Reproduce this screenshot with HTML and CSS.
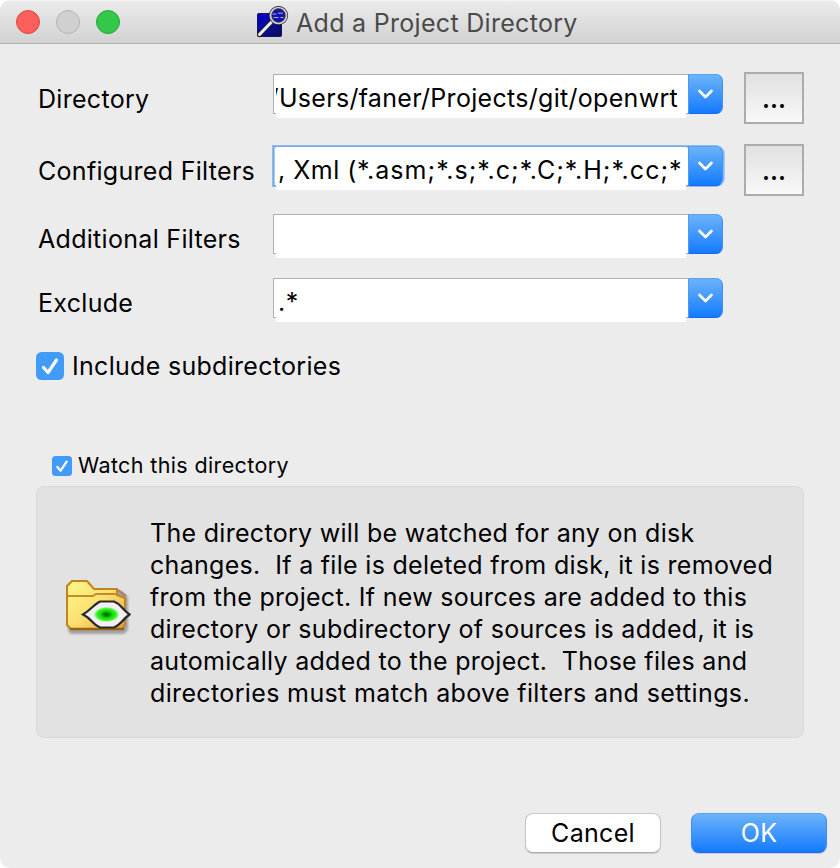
FILE: index.html
```html
<!DOCTYPE html>
<html lang="en">
<head>
<meta charset="utf-8">
<title>Add a Project Directory</title>
<link rel="stylesheet" href="styles.css">
</head>
<body>
<div class="window">
  <header class="titlebar">
    <div class="lights"><i class="light close"></i><i class="light minimize"></i><i class="light zoom"></i></div>
    <div class="title">
      <svg class="app-icon" width="32" height="32" viewBox="0 0 32 32">
        <defs><linearGradient id="sq" x1="0" y1="0" x2="1" y2="1"><stop offset="0" stop-color="#0000d0"/><stop offset=".5" stop-color="#0c0c9c"/><stop offset="1" stop-color="#0a0a50"/></linearGradient></defs>
        <rect x=".5" y="7.5" width="24" height="23" rx="1" fill="url(#sq)" stroke="#15155a"/>
        <path d="M2.500 28.500 15 15.500" stroke="#222" stroke-width="5" stroke-linecap="round"/>
        <path d="M2.500 28.500 15 15.500" stroke="#eee" stroke-width="3" stroke-linecap="round"/>
        <circle cx="21.500" cy="9.500" r="8" fill="#1414a8" stroke="#333" stroke-width="3.200"/>
        <circle cx="21.500" cy="9.500" r="8" fill="none" stroke="#d0d0d6" stroke-width="1.700"/>
        <path d="M15.500 8h4m1.500-.8h5M16.500 11.500h5m2 0h3" stroke="#a8a8e8" stroke-width="1"/>
      </svg>
      <span class="title-text">Add a Project Directory</span>
    </div>
  </header>

  <main class="content">
    <div class="row row-tall">
      <label class="label">Directory</label>
      <div class="combo"><div class="editor end"><span>/Users/faner/Projects/git/openwrt</span></div><div class="arrow"><svg width="18" height="12" viewBox="0 0 18 12"><path d="M2.500 3 8.500 9 14.500 3"/></svg></div></div>
      <div class="browse">...</div>
    </div>
    <div class="row row-tall">
      <label class="label">Configured Filters</label>
      <div class="combo focused"><div class="editor"><span class="names">, Xml (</span><span class="patterns">*.asm;*.s;*.c;*.C;*.H;*.cc;*</span></div><div class="arrow"><svg width="18" height="12" viewBox="0 0 18 12"><path d="M2.500 3 8.500 9 14.500 3"/></svg></div></div>
      <div class="browse">...</div>
    </div>
    <div class="row">
      <label class="label">Additional Filters</label>
      <div class="combo"><div class="editor"></div><div class="arrow"><svg width="18" height="12" viewBox="0 0 18 12"><path d="M2.500 3 8.500 9 14.500 3"/></svg></div></div>
    </div>
    <div class="row">
      <label class="label">Exclude</label>
      <div class="combo"><div class="editor"><span class="exclude">.*</span></div><div class="arrow"><svg width="18" height="12" viewBox="0 0 18 12"><path d="M2.500 3 8.500 9 14.500 3"/></svg></div></div>
    </div>

    <div class="check">
      <svg width="28" height="28" viewBox="0 0 28 28"><rect width="28" height="28" rx="5.500" fill="#419bf9"/><path class="tick" d="M7.500 15.500 12 20.500 20.500 8"/></svg>
      <span>Include subdirectories</span>
    </div>
    <div class="check small">
      <svg width="20" height="20" viewBox="0 0 28 28"><rect width="28" height="28" rx="5" fill="#419bf9"/><path class="tick" d="M7.500 15.500 12 20.500 20.500 8"/></svg>
      <span>Watch this directory</span>
    </div>

    <section class="group">
      <svg class="folder" width="66" height="58" viewBox="0 0 66 58">
        <defs>
          <linearGradient id="fo" x1="0" y1="0" x2="1" y2="1"><stop offset="0" stop-color="#fff78c"/><stop offset=".5" stop-color="#fce070"/><stop offset="1" stop-color="#e0a040"/></linearGradient>
          <radialGradient id="iris"><stop offset="0" stop-color="#005800"/><stop offset=".3" stop-color="#08a000"/><stop offset=".5" stop-color="#18e008"/><stop offset=".75" stop-color="#30f020"/><stop offset="1" stop-color="#c8f8c0"/></radialGradient>
          <filter id="soft"><feGaussianBlur stdDeviation="1"/></filter>
        </defs>
        <path d="M5 12h52l6 6v33l-4 4H6l-3-3Z" fill="#777" opacity=".6" filter="url(#soft)"/>
        <path d="M2 7 7 2h15l7 8h23v6l8 3v26l-3 5H6l-4-4Z" fill="url(#fo)" stroke="#c08420" stroke-width="2"/>
        <path d="M3 17h25l3-2h22" fill="none" stroke="#c48c28" stroke-width="2"/>
        <path d="M53 11l8 6" stroke="#a08068" stroke-width="2"/>
        <path d="M5 50h54" stroke="#9c6410" stroke-width="2.500"/>
        <path d="M18 35.500Q22 33 27 28.500T35 22.500H49Q53 24 57 28.500T64.500 35.500Q61 38 57 42.500T49 48.500H35Q31 47 27 42.500T18 35.500Z" fill="#f2f0f4" stroke="#282828" stroke-width="2.200"/>
        <ellipse cx="41.500" cy="35.500" rx="12.500" ry="7.500" fill="url(#iris)"/>
      </svg>
      <div class="note">
        <div>The directory will be watched for any on disk</div>
        <div>changes.&nbsp; If a file is deleted from disk, it is removed</div>
        <div>from the project. If new sources are added to this</div>
        <div>directory or subdirectory of sources is added, it is</div>
        <div>automically added to the project.&nbsp; Those files and</div>
        <div class="last">directories must match above filters and settings.</div>
      </div>
    </section>

    <footer class="actions">
      <div class="btn">Cancel</div>
      <div class="btn primary">OK</div>
    </footer>
  </main>
</div>
</body>
</html>
```
FILE: styles.css
```css
* { box-sizing: border-box; }
body { margin: 0; background: #fff; font-family: Inter, "Liberation Sans", sans-serif; font-size: 25px; letter-spacing: .3px; color: #000; }
.window { width: 840px; height: 868px; background: #ececec; border-radius: 10px; overflow: hidden; white-space: nowrap; }
.titlebar { height: 44px; display: flex; align-items: center; background: linear-gradient(#ebebeb, #d2d2d2); border-bottom: 1px solid #b1b1b1; border-top: 1px solid #f6f6f6; }
.lights { display: flex; gap: 16px; padding-left: 16px; width: 257px; }
.light { width: 24px; height: 24px; border-radius: 50%; border: 1px solid; }
.close { background: #fc605c; border-color: #e2443f; }
.minimize { background: #d0d0d0; border-color: #b3b3b3; }
.zoom { background: #34c84a; border-color: #24a732; }
.title { display: flex; align-items: center; gap: 7px; color: #4a4a4a; }
.title-text { padding-top: 2px; }
.app-icon { display: block; }
.content { padding-top: 28px; }
.row { height: 64px; padding-left: 38px; display: flex; align-items: flex-start; }
.row-tall { height: 72px; }
.row-tall + .row:not(.row-tall) { margin-top: -4px; }
.label { width: 235px; line-height: 30px; padding-top: 12px; }
.combo { width: 450px; height: 40px; margin-top: 2px; display: flex; justify-content: space-between; border: 1px solid #b0b0b0; border-right: 0; background: #fff; border-radius: 0 8px 8px 0; }
.focused { border-color: #76a9e2; box-shadow: 0 0 0 1px #8fbcec, 1px 0 0 1px #a3c9f2, inset 1px 1px 0 #a9cdf3; }
.editor { width: 410px; height: 43px; margin-left: 2px; background: #fff; overflow: hidden; line-height: 30px; padding: 8px 0 0 2px; }
.editor.end { display: flex; justify-content: flex-end; padding-right: 8px; }
.names { letter-spacing: .5px; }
.patterns { letter-spacing: 1.04px; }
.exclude { letter-spacing: .6px; }
.arrow { width: 35px; height: 40px; margin-top: -1px; display: flex; align-items: center; justify-content: center; background: linear-gradient(#6cb3fa, #147bff); border: 1px solid; border-color: #55a2f3 #3d90f8 #1768f3 #4a9bf8; border-radius: 0 7px 7px 0; }
.arrow path { fill: none; stroke: #fff; stroke-width: 2.7; stroke-linecap: round; stroke-linejoin: round; }
.browse { width: 60px; height: 52px; margin-left: 21px; border: 2px solid #acacac; background: linear-gradient(#e1e1e1, #f8f8f8); text-align: center; line-height: 51px; font-weight: 600; letter-spacing: 0; }
.check { height: 28px; margin: 12px 0 0 36px; display: flex; align-items: center; gap: 8px; }
.tick { fill: none; stroke: #fff; stroke-width: 3.2; stroke-linecap: round; stroke-linejoin: round; }
.check.small { height: 20px; margin: 76px 0 0 52px; font-size: 21.5px; gap: 6px; letter-spacing: .37px; }
.check.small span { position: relative; top: -1px; }
.group { width: 768px; height: 252px; margin: 10px 0 0 36px; border: 1px solid #d8d8d8; border-radius: 8px; background: #e2e2e2; display: flex; padding: 30px 0 0 28px; }
.folder { margin-top: 62px; margin-right: 19px; flex: none; }
.note { line-height: 32px; }
.last { letter-spacing: .36px; }
.actions { display: flex; gap: 30px; margin: 75px 0 0 525px; }
.btn { width: 136px; height: 40px; border-radius: 8px; background: #fff; border: 1px solid; border-color: #c9c9c9 #c4c4c4 #acacac; display: flex; align-items: center; justify-content: center; box-shadow: 0 1px 1px #0002; }
.primary { color: #fff; background: linear-gradient(#6cb3fa, #147bff); border-color: #55a2f3 #3d90f8 #1768f3; }
```
